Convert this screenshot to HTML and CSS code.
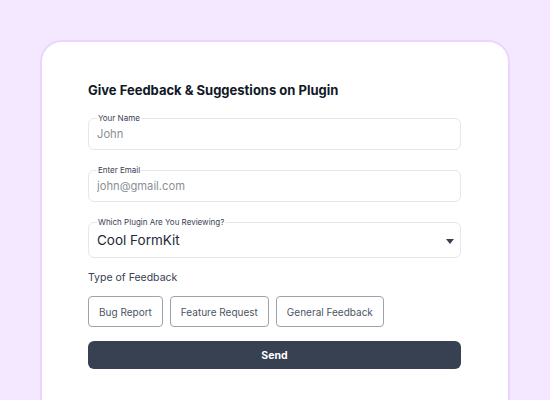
FILE: index.html
```html
<!DOCTYPE html>
<html lang="en">
<head>
<meta charset="utf-8">
<title>Feedback</title>
<link rel="stylesheet" href="styles.css">
</head>
<body>
<main class="card">
  <h1 class="title">Give Feedback &amp; Suggestions on Plugin</h1>
  <form class="form">
    <fieldset class="field">
      <legend class="field-label">Your Name</legend>
      <input class="field-input" type="text" placeholder="John">
    </fieldset>
    <fieldset class="field">
      <legend class="field-label">Enter Email</legend>
      <input class="field-input" type="email" placeholder="john@gmail.com">
    </fieldset>
    <fieldset class="field field-select">
      <legend class="field-label">Which Plugin Are You Reviewing?</legend>
      <div class="select-row">
        <select class="field-selectbox">
          <option>Cool FormKit</option>
        </select>
        <svg class="caret" width="8" height="5" viewBox="0 0 8 5"><path d="M0 0H8L4 5Z" fill="#374151"/></svg>
      </div>
    </fieldset>
    <p class="group-label">Type of Feedback</p>
    <div class="chips">
      <button type="button" class="chip">Bug Report</button>
      <button type="button" class="chip">Feature Request</button>
      <button type="button" class="chip">General Feedback</button>
    </div>
    <button type="button" class="send">Send</button>
  </form>
</main>
</body>
</html>
```
FILE: styles.css
```css
* { box-sizing: border-box; }
html, body { margin: 0; }
body {
  background: #f3e8ff;
  padding: 40px;
  font-family: Inter, "Noto Sans", sans-serif;
  min-height: 400px;
}
.card {
  background: #ffffff;
  border: 2px solid #e9d5ff;
  border-radius: 22px;
  padding: 38px 47px 60px 46px;
  width: 470px;
}
.title {
  margin: 0;
  font-size: 13px;
  line-height: 20px;
  font-weight: 700;
  color: #111827;
}
.form {
  display: flex;
  flex-direction: column;
  margin-top: 13px;
}
.field {
  margin: 0 0 15px 0;
  padding: 0 8px 4px 8px;
  border: 1px solid #e5e7eb;
  border-radius: 6px;
  min-inline-size: 0;
}
.field-label {
  font-size: 8px;
  line-height: 10px;
  padding: 0 1px;
  color: #374151;
}
.field-input {
  display: block;
  width: 100%;
  border: 0;
  outline: 0;
  padding: 0;
  height: 22px;
  line-height: 22px;
  font-family: inherit;
  font-size: 11.2px;
  color: #1f2937;
  background: transparent;
}
.field-input::placeholder { color: #8b8f97; }
.field-select { margin-bottom: 0; padding-right: 6px; }
.select-row {
  display: flex;
  align-items: center;
  height: 26px;
}
.field-selectbox {
  flex: 1;
  appearance: none;
  -webkit-appearance: none;
  border: 0;
  outline: 0;
  padding: 0;
  background: transparent;
  font-family: inherit;
  font-size: 13.5px;
  color: #1f2937;
}
.caret { display: block; margin-top: 2px; }
.group-label {
  margin: 12px 0 10px 0;
  font-size: 10.5px;
  line-height: 16px;
  color: #374151;
}
.chips {
  display: flex;
  gap: 7px;
}
.chip {
  height: 31px;
  padding: 0 10px;
  border: 1px solid #9ca3af;
  border-radius: 4px;
  background: #ffffff;
  font-family: inherit;
  font-size: 10px;
  color: #4b5563;
}
.send {
  margin-top: 14px;
  height: 28px;
  border: 0;
  border-radius: 6px;
  background: #374151;
  color: #ffffff;
  font-family: inherit;
  font-size: 10.5px;
  font-weight: 700;
}
```
